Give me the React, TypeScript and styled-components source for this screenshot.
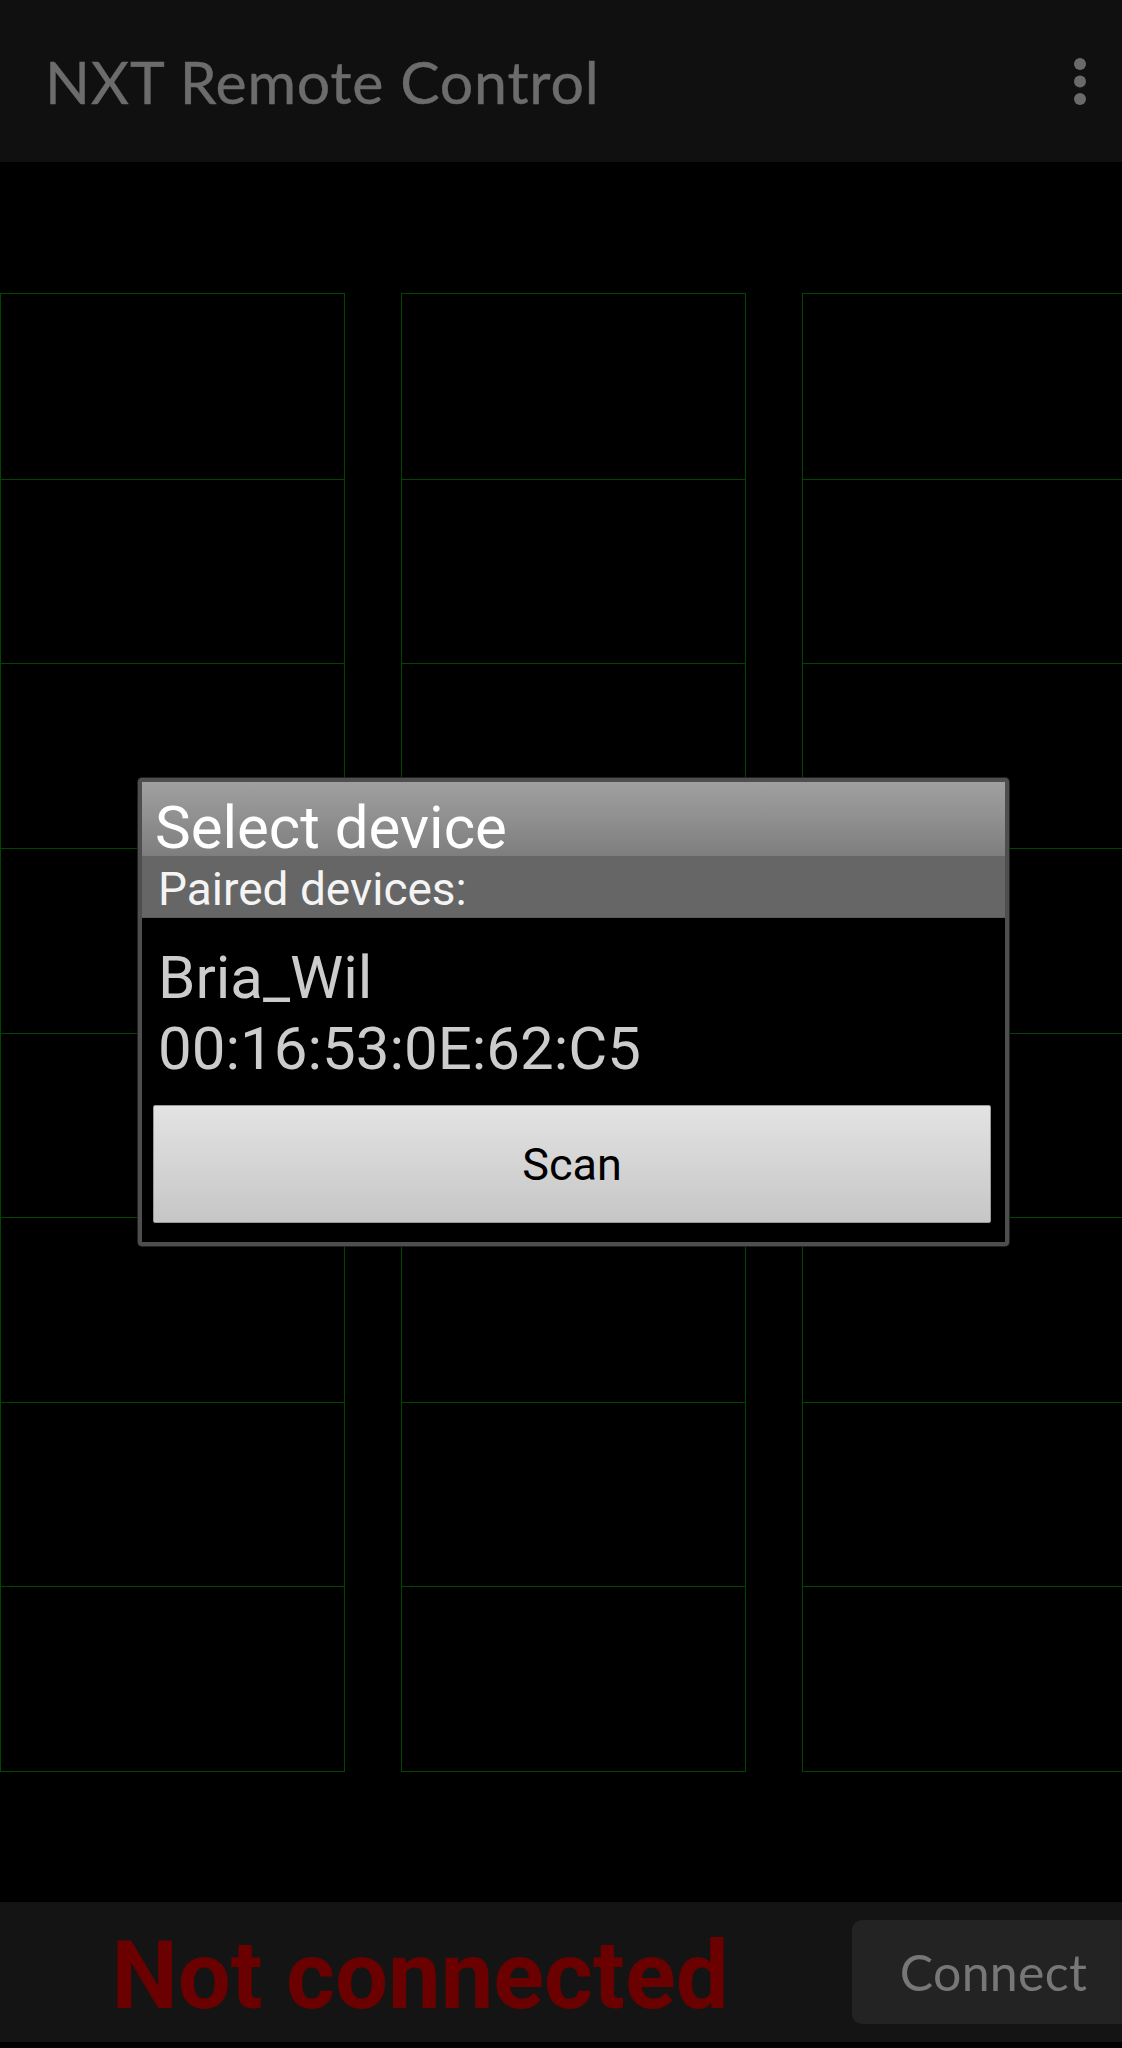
import React from "react";
import styled, { createGlobalStyle } from "styled-components";

const GlobalStyle = createGlobalStyle`
  html, body {
    margin: 0;
    padding: 0;
    background: #000;
  }
  * { box-sizing: border-box; }
`;

const Screen = styled.div`
  width: 1122px;
  height: 2048px;
  background: #000;
  overflow: hidden;
  display: flex;
  flex-direction: column;
  font-family: Roboto, "Liberation Sans", sans-serif;
`;

const AppBar = styled.header`
  height: 162px;
  flex: none;
  background: #101010;
  display: flex;
  align-items: center;
  justify-content: space-between;
  padding: 0 36px 0 45px;
`;

const AppTitle = styled.h1`
  margin: 0;
  font-family: Lato, "Open Sans", sans-serif;
  font-weight: 400;
  font-size: 59px;
  line-height: 1;
  color: #6c6c6c;
  letter-spacing: 0.8px;
  -webkit-text-stroke: 0.4px #6c6c6c;
`;

const Main = styled.main`
  position: relative;
  height: 1740px;
  flex: none;
  padding-top: 131px;
`;

const Grid = styled.div`
  display: flex;
  gap: 56px;
  width: 1200px;
`;

const Column = styled.div`
  width: 345px;
  height: 1479px;
  flex: none;
  border: 1px solid #004600;
  display: grid;
  grid-template-rows: repeat(8, 1fr);
`;

const Cell = styled.div`
  border-top: 1px solid #004600;
  &:first-child { border-top: none; }
`;

const Dialog = styled.div`
  position: absolute;
  left: 138px;
  top: 616px;
  width: 871px;
  height: 468px;
  border: 4px solid #4e4e4e;
  border-radius: 4px;
  background: #000;
  box-shadow: 0 0 0 1px #222;
  display: flex;
  flex-direction: column;
`;

const DialogTitle = styled.div`
  height: 74px;
  flex: none;
  padding: 16px 0 0 13px;
  background: linear-gradient(#a0a0a0, #7e7e7e);
  color: #fff;
  font-size: 60px;
  line-height: 1;
  white-space: nowrap;
`;

const SubHeader = styled.div`
  height: 62px;
  flex: none;
  padding: 10px 0 0 16px;
  background: #666666;
  color: #f4f4f4;
  font-size: 46px;
  line-height: 1;
  border-bottom: 1px solid #5a5a5a;
`;

const DeviceEntry = styled.div`
  margin-top: 24px;
  padding-left: 16px;
  color: #cccccc;
  font-size: 60px;
  line-height: 71px;
`;

const ScanButton = styled.button`
  margin: 21px 14px 0 11px;
  height: 118px;
  border: 1px solid #9a9a9a;
  border-radius: 2px;
  background: linear-gradient(#e3e3e3, #c6c6c6);
  color: #000;
  font-family: Roboto, "Liberation Sans", sans-serif;
  font-size: 45px;
  line-height: 1;
  display: flex;
  align-items: center;
  justify-content: center;
  padding: 0;
`;

const BottomBar = styled.footer`
  height: 140px;
  flex: none;
  background: #141414;
  display: flex;
  align-items: center;
`;

const Status = styled.div`
  flex: 1;
  text-align: center;
  padding: 7px 12px 0 0;
  color: #6a0000;
  font-weight: 700;
  font-size: 94px;
  line-height: 1;
  white-space: nowrap;
`;

const ConnectButton = styled.button`
  flex: none;
  width: 283px;
  height: 104px;
  margin-right: -13px;
  border: none;
  border-radius: 10px;
  background: #232323;
  color: #777777;
  font-family: Lato, "Open Sans", sans-serif;
  font-size: 50px;
  line-height: 1;
  letter-spacing: 0.3px;
  padding: 0;
  display: flex;
  align-items: center;
  justify-content: center;
`;

const OverflowIcon = () => (
  <svg width="12" height="47" viewBox="0 0 12 47" aria-hidden="true">
    <circle cx="6" cy="6" r="6" fill="#6a6a6a" />
    <circle cx="6" cy="23.5" r="6" fill="#6a6a6a" />
    <circle cx="6" cy="41" r="6" fill="#6a6a6a" />
  </svg>
);

export default function App() {
  const columns = [0, 1, 2];
  const rows = [0, 1, 2, 3, 4, 5, 6, 7];
  return (
    <>
      <GlobalStyle />
      <Screen>
        <AppBar>
          <AppTitle>NXT Remote Control</AppTitle>
          <OverflowIcon />
        </AppBar>
        <Main>
          <Grid>
            {columns.map((c) => (
              <Column key={c}>
                {rows.map((r) => (
                  <Cell key={r} />
                ))}
              </Column>
            ))}
          </Grid>
          <Dialog>
            <DialogTitle>Select device</DialogTitle>
            <SubHeader>Paired devices:</SubHeader>
            <DeviceEntry>
              Bria_Wil
              <br />
              00:16:53:0E:62:C5
            </DeviceEntry>
            <ScanButton>Scan</ScanButton>
          </Dialog>
        </Main>
        <BottomBar>
          <Status>Not connected</Status>
          <ConnectButton>Connect</ConnectButton>
        </BottomBar>
      </Screen>
    </>
  );
}
